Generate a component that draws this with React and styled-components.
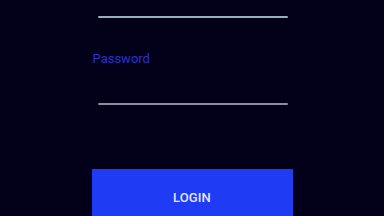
import React from 'react'
import styled, { createGlobalStyle } from 'styled-components'

const Global = createGlobalStyle`
  html, body {
    margin: 0;
    padding: 0;
    background: #03011a;
  }
  body {
    font-family: Roboto, "Liberation Sans", sans-serif;
    overflow: hidden;
  }
`;

const Screen = styled.div`
  width: 384px;
  height: 216px;
  background: #03011a;
  display: flex;
  justify-content: center;
  align-items: flex-start;
  overflow: hidden;
`;

const Form = styled.div`
  width: 201px;
  display: flex;
  flex-direction: column;
  padding-top: 16px;
`;

const Underline = styled.div`
  height: 2px;
  margin: 0 5px 0 6px;
  background: ${p => p.$color};
  border-radius: 1px;
`;

const Label = styled.label`
  margin-top: 33px;
  padding-left: 1px;
  font-size: 13px;
  line-height: 16px;
  color: #2a30d4;
  height: 52px;
`;

const LoginButton = styled.button`
  margin-top: 64px;
  height: 56px;
  border: none;
  background: #1f3bf3;
  color: #e2e7ff;
  font-family: Roboto, "Liberation Sans", sans-serif;
  font-weight: 500;
  font-size: 13px;
  letter-spacing: 0.1px;
  padding: 0;
`;

export default function App() {
  return (
    <Screen>
      <Global />
      <Form>
        <Underline $color="#8fb2bb" />
        <Label>Password</Label>
        <Underline $color="#8b8d9e" />
        <LoginButton>LOGIN</LoginButton>
      </Form>
    </Screen>
  )
}
